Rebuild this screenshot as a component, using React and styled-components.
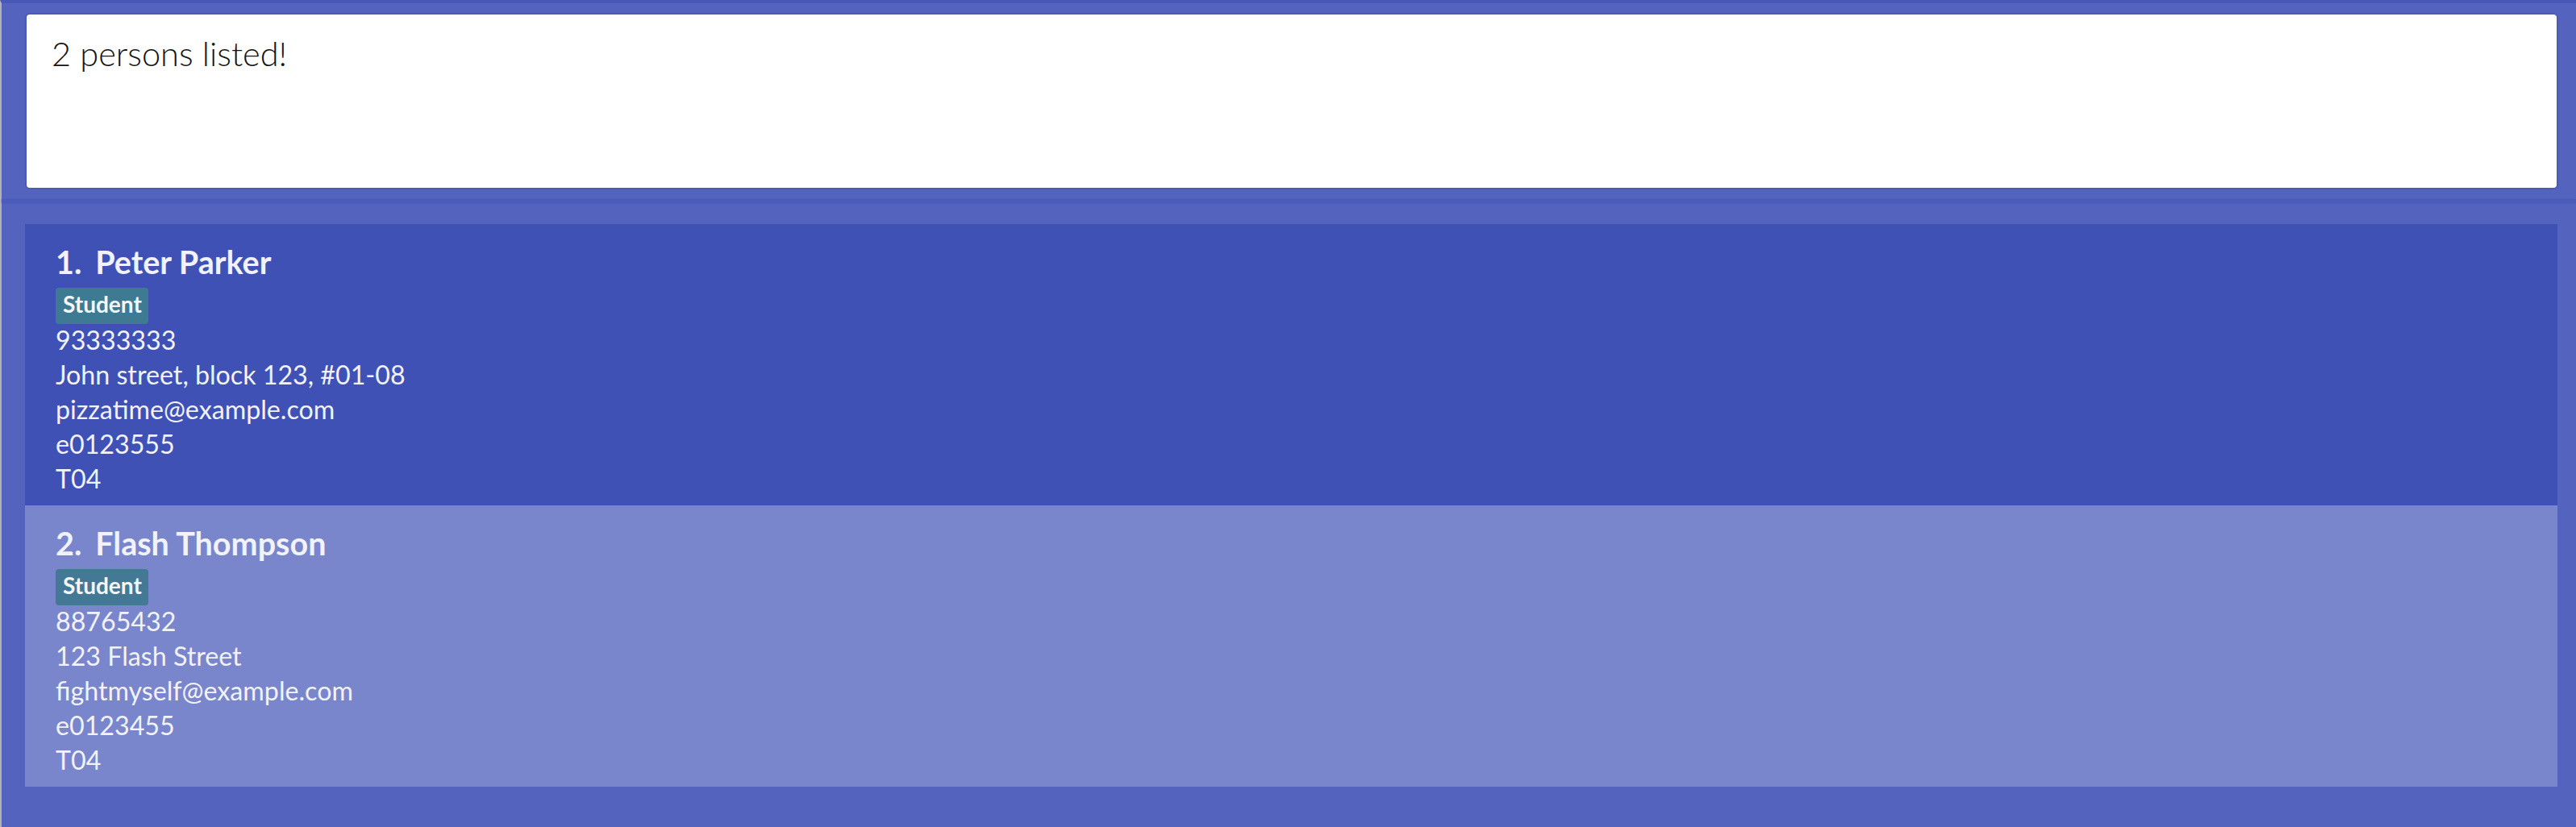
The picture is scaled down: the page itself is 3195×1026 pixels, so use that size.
import React from "react";
import styled, { createGlobalStyle } from "styled-components";

const GlobalStyle = createGlobalStyle`
  html, body { margin: 0; padding: 0; background: #5363be; }
  body { font-family: "Lato", "Open Sans", sans-serif; }
`;

const Window = styled.div`
  box-sizing: border-box;
  height: 1026px;
  border-left: 2px solid #b2b2b6;
  border-top: 4px solid #4858b8;
  background: #5363be;
  display: flex;
  flex-direction: column;
`;

const ResultPane = styled.div`
  padding: 12px 22px 12px 29px;
`;

const ResultBox = styled.div`
  box-sizing: border-box;
  height: 219px;
  background: #ffffff;
  border: 2px solid #4a5ab9;
  border-radius: 6px;
  padding: 24px 31px;
  font-family: "Lato", "Open Sans", sans-serif;
  font-weight: 300;
  font-size: 41.5px;
  line-height: 1.2;
  color: #141414;
`;

const Divider = styled.div`
  height: 5px;
  background: #4b5bb9;
  box-shadow: 0 0 2px #4b5bb9;
`;

const ListPane = styled.div`
  padding: 26px 23px 0 29px;
  display: flex;
  flex-direction: column;
`;

const Card = styled.div`
  box-sizing: border-box;
  height: 349px;
  padding: 23px 39px 11px 38px;
  background: ${(p) => (p.$alt ? "#7986cb" : "#3f51b5")};
  color: #f1f2fb;
  display: flex;
  flex-direction: column;
  align-items: flex-start;
`;

const NameRow = styled.div`
  display: flex;
  gap: 17px;
  font-weight: 700;
  font-size: 39.5px;
  line-height: 1.2;
`;

const Tags = styled.div`
  display: flex;
  gap: 8px;
  margin-top: 9px;
  margin-bottom: -2px;
`;

const Tag = styled.span`
  background: ${(p) => (p.$alt ? "#447995" : "#3e7a92")};
  border-radius: 4px;
  padding: 4px 8px 7px 9px;
  font-weight: 700;
  font-size: 28px;
  line-height: 1.2;
  color: #f4f6fa;
`;

const Field = styled.div`
  font-weight: 400;
  font-size: 32.2px;
  line-height: 43px;
`;

const persons = [
  {
    name: "Peter Parker",
    tags: ["Student"],
    fields: ["93333333", "John street, block 123, #01-08", "pizzatime@example.com", "e0123555", "T04"],
  },
  {
    name: "Flash Thompson",
    tags: ["Student"],
    fields: ["88765432", "123 Flash Street", "fightmyself@example.com", "e0123455", "T04"],
  },
];

export default function App() {
  return (
    <>
      <GlobalStyle />
      <Window>
        <ResultPane>
          <ResultBox>2 persons listed!</ResultBox>
        </ResultPane>
        <Divider />
        <ListPane>
          {persons.map((p, i) => (
            <Card key={p.name} $alt={i % 2 === 1}>
              <NameRow>
                <span>{i + 1}.</span>
                <span>{p.name}</span>
              </NameRow>
              <Tags>
                {p.tags.map((t) => (
                  <Tag key={t} $alt={i % 2 === 1}>
                    {t}
                  </Tag>
                ))}
              </Tags>
              {p.fields.map((f, k) => (
                <Field key={k}>{f}</Field>
              ))}
            </Card>
          ))}
        </ListPane>
      </Window>
    </>
  );
}
